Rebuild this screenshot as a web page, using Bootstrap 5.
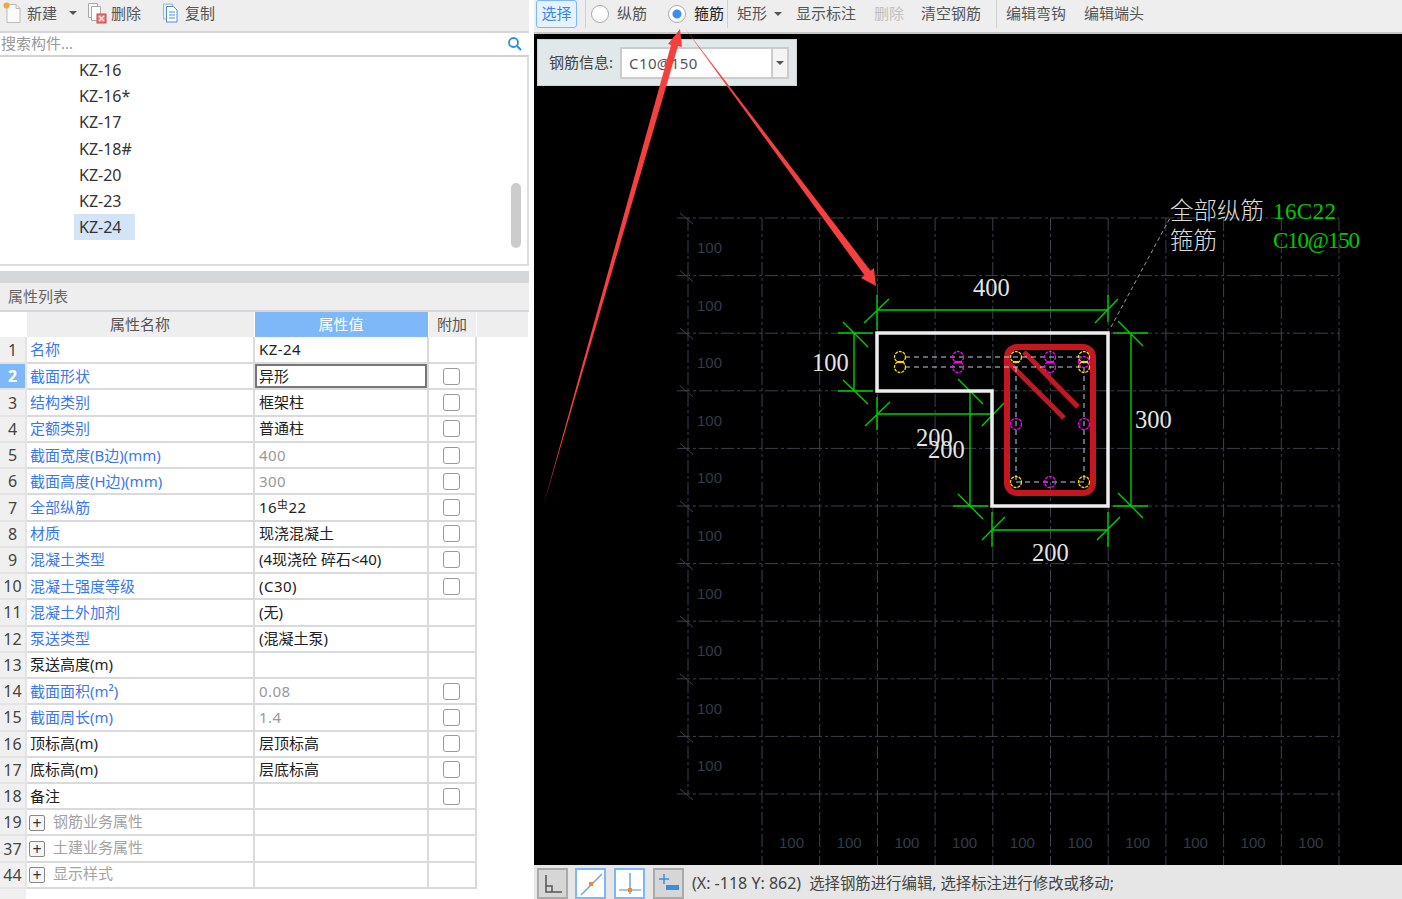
<!DOCTYPE html>
<html lang="zh-CN">
<head>
<meta charset="UTF-8" />
<title>钢筋编辑</title>
<link href="https://cdn.jsdelivr.net/npm/bootstrap@5.3.2/dist/css/bootstrap.min.css" rel="stylesheet" />
<style>
  html, body { height: 100%; }
  body { font-family: "Noto Sans", "Noto Sans CJK SC", sans-serif; font-size: 15px; line-height: 1; color: #333; background: #fff; overflow: hidden; position: relative; }
  .left-side { width: 529px; flex: none; }
  .right-side { width: 868px; flex: none; margin-left: 5px; }
  .tool-bar { height: 33px; background: #eee; border-bottom: 2px solid #d6d7da; color: #555; }
  .tool-left { padding: 0 0 5px 3px; }
  .tool-left .tool-item { margin-right: 20px; }
  .tool-left .tool-item.new-item { margin-right: 10px; }
  .tool-item { display: flex; align-items: center; gap: 4px; white-space: nowrap; }
  .drop-arrow { width: 0; height: 0; border: 4px solid transparent; border-top: 4px solid #555; border-bottom: 0; display: inline-block; }
  .search-row { height: 24px; border-bottom: 2px solid #d0d2d5; padding: 0 7px 2px 1px; color: #999; }
  .part-list { height: 209px; border-right: 2px solid #dcdde0; border-bottom: 2px solid #dcdde0; font-size: 16px; }
  .part-item { height: 26.2px; padding: 0 0 0 79px; display: flex; align-items: center; }
  .part-item.active-part { padding: 0; }
  .part-item.active-part span { background: #d3e4f6; margin-left: 74px; padding: 0 13px 0 5px; height: 26px; display: flex; align-items: center; }
  .list-scroll { width: 10px; height: 65px; left: 511px; top: 183px; background: #ccc; border-radius: 5px; }
  .gray-band { height: 12px; margin-top: 5px; background: #d6d7da; }
  .panel-title { height: 29px; background: #eee; border-bottom: 2px solid #d6d7da; padding: 0 0 0 8px; color: #666; }
  .prop-table { table-layout: fixed; width: 528px; border-collapse: collapse; margin: 0; }
  .prop-table th, .prop-table td { padding: 0; height: 26.24px; border: 0; border-right: 2px solid #d8dadd; border-bottom: 2px solid #d8dadd; font-weight: 400; white-space: nowrap; overflow: hidden; }
  .prop-table thead th { height: 25px; background: #eee; text-align: center; color: #555; border-bottom: 0; border-right: 1px solid #fff; }
  .prop-table thead th.idx-head { background: #fff; }
  .prop-table thead th.val-head { background: #7fb8f8; color: #fff; }
  .prop-table thead th.tail-head { border-right: 0; }
  .prop-table .row-no { background: #f0f0f0; text-align: center; color: #444; font-size: 16px; border-right: 2px solid #e4e4e4; border-bottom-color: #e4e4e4; }
  .prop-table .row-no.sel-no { background: #7fb8f8; color: #fff; font-weight: 700; }
  .prop-table .row-name { padding-left: 3px; color: #3b77ee; }
  .prop-table .row-name.plain-name { color: #222; }
  .prop-table .row-name.group-name { color: #a3a3a3; padding-left: 2px; }
  .prop-table .row-val { padding-left: 4px; color: #222; }
  .prop-table .row-val.latin-val { letter-spacing: .45px; }
  .prop-table .row-val.dim-val { color: #999; }
  .prop-table .row-val.edit-val { box-shadow: inset 0 0 0 2px #777; }
  .prop-table .row-add { text-align: center; }
  .prop-table .row-tail { border: 0; }
  .prop-table .foot-row td { height: 11px; border: 0; }
  .prop-table .form-check-input { width: 17px; height: 17px; margin: 0 2px 0 0; border: 1.5px solid #999; border-radius: 3px; }
  .grade-mark { font-size: 11px; position: relative; top: -4px; }
  .plus-box { display: inline-flex; width: 16px; height: 16px; border: 1px solid #888; border-radius: 2px; margin-right: 8px; vertical-align: middle; justify-content: center; align-items: center; color: #333; font-size: 16px; line-height: 1; background: #f6f6f6; }
  .tool-right { padding-bottom: 5px; border-bottom-color: #c8c8c8; height: 34px; }
  .pick-btn { --bs-btn-padding-x: 0; --bs-btn-padding-y: 0; --bs-btn-font-size: 15px; --bs-btn-line-height: 1; width: 41px; height: 28px; margin-left: 2px; background: #e6f2ff; border: 1px solid #7db7f5; color: #3a85e8; border-radius: 3px; }
  .bar-sep { width: 1px; height: 28px; background: #d0d0d0; flex: none; }
  .tool-right .form-check-input { width: 18px; height: 18px; margin: 0; border: 1.5px solid #aaa; background-color: #fff; float: none; }
  .tool-right .form-check-input:checked { background-color: #fff; border-color: #aaa; background-image: radial-gradient(circle, #3d8ef0 0, #3d8ef0 4px, transparent 5px); }
  .off-item { color: #c0c0c0; }
  .strong-item { color: #222; }
  .radio-item { gap: 8px; }
  .canvas-wrap { height: 831px; background: #000; }
  .canvas-wrap svg { display: block; }
  .rebar-info { left: 3px; top: 5px; width: 260px; height: 47px; background: #e1e8ea; border: 1px solid #ccd2d4; padding: 0 7px 0 11px; gap: 7px; color: #444; }
  .rebar-info .input-group { width: 169px; }
  .rebar-info .form-control { height: 32px; padding: 0 7px; font-size: 15px; letter-spacing: .4px; border: 2px solid #ccc; border-right: 0; border-radius: 0; color: #555; background: #fff; font-family: inherit; }
  .rebar-info .btn { --bs-btn-padding-x: 0; width: 18px; height: 32px; background: #f4f4f4; border: 2px solid #ccc; border-radius: 0; display: flex; align-items: center; justify-content: center; }
  .status-bar { height: 34px; background: #e6e6e6; padding-left: 3px; color: #444; font-size: 15.4px; white-space: nowrap; }
  .state-btn { width: 31px; height: 31px; margin-top: 3px; margin-right: 8px; display: flex; align-items: center; justify-content: center; background: #d6d6d6; border: 2px solid #aaa; flex: none; }
  .state-btn.first-state { margin-right: 7px; }
  .state-btn.on-state { background: #fff; border-color: #7db7f5; }
  .status-text { padding-top: 3px; }
  .coord-text { font-size: 16px; }
  .arrow-layer { left: 0; top: 0; pointer-events: none; }
  .dim-text { font-family: "Liberation Serif", serif; font-size: 24.5px; fill: #e4e4e4; }
  .grid-text { font-family: "Liberation Sans", sans-serif; font-size: 15px; fill: #333c48; }
  .note-text { font-family: "Noto Sans CJK SC", sans-serif; font-size: 23.5px; font-weight: 300; fill: #ddd; }
  .note-green { font-family: "Liberation Serif", serif; font-size: 23px; fill: #00c800; }
</style>
</head>
<body>
<div class="d-flex">
  <div class="left-side position-relative">
    <div class="tool-bar tool-left d-flex align-items-center">
      <div class="tool-item new-item">
        <svg width="20" height="22" viewBox="0 0 20 22"><path d="M4 2.500h9l4 4v14H4z" fill="#fafafa" stroke="#bbb"/><path d="M13 2.500v4h4" fill="none" stroke="#bbb"/><circle cx="3.500" cy="3.500" r="3" fill="#f5a33c"/></svg>
        <span>新建</span><span class="drop-arrow ms-2"></span>
      </div>
      <div class="tool-item">
        <svg width="20" height="22" viewBox="0 0 20 22"><path d="M1.500 1.500h9v14h-9z" fill="#f4f4f4" stroke="#aaa"/><path d="M4.500 4.500h9v14h-9z" fill="#fbfbfb" stroke="#aaa"/><rect x="10" y="12" width="9" height="9" fill="#e87a7a" stroke="#c84a4a"/><path d="M12 14l5 5M17 14l-5 5" stroke="#fff" stroke-width="1.200"/></svg>
        <span>删除</span>
      </div>
      <div class="tool-item">
        <svg width="20" height="22" viewBox="0 0 20 22"><path d="M2.500 2h9v15h-9z" fill="#eaf1fa" stroke="#9db4d2"/><path d="M5.500 4.500h7l3.500 3.500v12h-10.500z" fill="#fff" stroke="#4d8cd6"/><path d="M8 10h6M8 13h6M8 16h6" stroke="#4d8cd6"/></svg>
        <span>复制</span>
      </div>
    </div>
    <div class="search-row d-flex align-items-center justify-content-between">
      <span>搜索构件...</span>
      <svg width="15" height="15" viewBox="0 0 15 15"><circle cx="6.500" cy="6.500" r="4.500" fill="none" stroke="#2f8fd6" stroke-width="1.800"/><path d="M10 10l4 4" stroke="#2f8fd6" stroke-width="2"/></svg>
    </div>
    <div class="part-list">
      <div class="part-item">KZ-16</div>
      <div class="part-item">KZ-16*</div>
      <div class="part-item">KZ-17</div>
      <div class="part-item">KZ-18#</div>
      <div class="part-item">KZ-20</div>
      <div class="part-item">KZ-23</div>
      <div class="part-item active-part"><span>KZ-24</span></div>
    </div>
    <div class="list-scroll position-absolute"></div>
    <div class="gray-band"></div>
    <div class="panel-title d-flex align-items-center">属性列表</div>
    <table class="prop-table">
      <colgroup><col style="width:26px"><col style="width:228px"><col style="width:174px"><col style="width:48px"><col style="width:52px"></colgroup>
      <thead>
        <tr><th class="idx-head"></th><th>属性名称</th><th class="val-head">属性值</th><th>附加</th><th class="tail-head"></th></tr>
      </thead>
      <tbody>
        <tr><td class="row-no">1</td><td class="row-name">名称</td><td class="row-val latin-val">KZ-24</td><td class="row-add"></td><td class="row-tail"></td></tr>
        <tr><td class="row-no sel-no">2</td><td class="row-name">截面形状</td><td class="row-val edit-val">异形</td><td class="row-add"><input class="form-check-input" type="checkbox"></td><td class="row-tail"></td></tr>
        <tr><td class="row-no">3</td><td class="row-name">结构类别</td><td class="row-val">框架柱</td><td class="row-add"><input class="form-check-input" type="checkbox"></td><td class="row-tail"></td></tr>
        <tr><td class="row-no">4</td><td class="row-name">定额类别</td><td class="row-val">普通柱</td><td class="row-add"><input class="form-check-input" type="checkbox"></td><td class="row-tail"></td></tr>
        <tr><td class="row-no">5</td><td class="row-name">截面宽度(B边)(mm)</td><td class="row-val latin-val dim-val">400</td><td class="row-add"><input class="form-check-input" type="checkbox"></td><td class="row-tail"></td></tr>
        <tr><td class="row-no">6</td><td class="row-name">截面高度(H边)(mm)</td><td class="row-val latin-val dim-val">300</td><td class="row-add"><input class="form-check-input" type="checkbox"></td><td class="row-tail"></td></tr>
        <tr><td class="row-no">7</td><td class="row-name">全部纵筋</td><td class="row-val latin-val">16<span class="grade-mark">虫</span>22</td><td class="row-add"><input class="form-check-input" type="checkbox"></td><td class="row-tail"></td></tr>
        <tr><td class="row-no">8</td><td class="row-name">材质</td><td class="row-val">现浇混凝土</td><td class="row-add"><input class="form-check-input" type="checkbox"></td><td class="row-tail"></td></tr>
        <tr><td class="row-no">9</td><td class="row-name">混凝土类型</td><td class="row-val">(4现浇砼 碎石&lt;40)</td><td class="row-add"><input class="form-check-input" type="checkbox"></td><td class="row-tail"></td></tr>
        <tr><td class="row-no">10</td><td class="row-name">混凝土强度等级</td><td class="row-val latin-val">(C30)</td><td class="row-add"><input class="form-check-input" type="checkbox"></td><td class="row-tail"></td></tr>
        <tr><td class="row-no">11</td><td class="row-name">混凝土外加剂</td><td class="row-val">(无)</td><td class="row-add"></td><td class="row-tail"></td></tr>
        <tr><td class="row-no">12</td><td class="row-name">泵送类型</td><td class="row-val">(混凝土泵)</td><td class="row-add"></td><td class="row-tail"></td></tr>
        <tr><td class="row-no">13</td><td class="row-name plain-name">泵送高度(m)</td><td class="row-val"></td><td class="row-add"></td><td class="row-tail"></td></tr>
        <tr><td class="row-no">14</td><td class="row-name">截面面积(m²)</td><td class="row-val latin-val dim-val">0.08</td><td class="row-add"><input class="form-check-input" type="checkbox"></td><td class="row-tail"></td></tr>
        <tr><td class="row-no">15</td><td class="row-name">截面周长(m)</td><td class="row-val latin-val dim-val">1.4</td><td class="row-add"><input class="form-check-input" type="checkbox"></td><td class="row-tail"></td></tr>
        <tr><td class="row-no">16</td><td class="row-name plain-name">顶标高(m)</td><td class="row-val">层顶标高</td><td class="row-add"><input class="form-check-input" type="checkbox"></td><td class="row-tail"></td></tr>
        <tr><td class="row-no">17</td><td class="row-name plain-name">底标高(m)</td><td class="row-val">层底标高</td><td class="row-add"><input class="form-check-input" type="checkbox"></td><td class="row-tail"></td></tr>
        <tr><td class="row-no">18</td><td class="row-name plain-name">备注</td><td class="row-val"></td><td class="row-add"><input class="form-check-input" type="checkbox"></td><td class="row-tail"></td></tr>
        <tr><td class="row-no">19</td><td class="row-name group-name"><span class="plus-box">+</span>钢筋业务属性</td><td class="row-val"></td><td class="row-add"></td><td class="row-tail"></td></tr>
        <tr><td class="row-no">37</td><td class="row-name group-name"><span class="plus-box">+</span>土建业务属性</td><td class="row-val"></td><td class="row-add"></td><td class="row-tail"></td></tr>
        <tr><td class="row-no">44</td><td class="row-name group-name"><span class="plus-box">+</span>显示样式</td><td class="row-val"></td><td class="row-add"></td><td class="row-tail"></td></tr>
        <tr class="foot-row"><td class="row-no"></td><td colspan="4"></td></tr>
      </tbody>
    </table>
  </div>

  <div class="right-side">
    <div class="tool-bar tool-right d-flex align-items-center">
      <button type="button" class="btn pick-btn">选择</button>
      <span class="bar-sep ms-2"></span>
      <label class="tool-item radio-item" style="margin-left:5px"><input class="form-check-input" type="radio" name="barType">纵筋</label>
      <label class="tool-item radio-item strong-item" style="margin-left:21px"><input class="form-check-input" type="radio" name="barType" checked>箍筋</label>
      <span class="bar-sep" style="margin-left:3px"></span>
      <span class="tool-item" style="margin-left:9px;gap:7px">矩形<span class="drop-arrow"></span></span>
      <span class="tool-item" style="margin-left:14px">显示标注</span>
      <span class="tool-item off-item" style="margin-left:18px">删除</span>
      <span class="tool-item" style="margin-left:17px">清空钢筋</span>
      <span class="bar-sep" style="margin-left:15px"></span>
      <span class="tool-item" style="margin-left:9px">编辑弯钩</span>
      <span class="tool-item" style="margin-left:18px">编辑端头</span>
    </div>
    <div class="canvas-wrap position-relative">
      <svg id="drawing" width="868" height="831" viewBox="534 34 868 831">
        <g id="gridLayer" fill="none" stroke="#39424f" stroke-width="1" stroke-dasharray="13 3 3 3"></g>
        <g id="gridLabels"></g>
        <path d="M1111 327L1170 218" stroke="#999" stroke-dasharray="4 3" fill="none"/>
        <!-- dimension lines -->
        <g stroke="#00d000" stroke-width="1.400" fill="none">
          <path d="M877 295V330M1108 295V322M877 310H1108M864 323L889 299M1095 323L1118 299"/>
          <path d="M838 333H873M838 391H873M854 333V391M843 322L868 347M843 380L868 404"/>
          <path d="M1113 333H1148M1113 506H1148M1131 333V506M1118 321L1143 346M1118 493L1143 518"/>
          <path d="M992 512V547M1108 512V547M992 530H1108M982 540L1005 517M1097 540L1120 517"/>
          <path d="M877 397V430M992 397V430M877 414H992M865 426L890 402M982 426L1004 403"/>
          <path d="M953 391H988M953 506H988M970 391V506M958 379L983 404M958 494L983 519"/>
        </g>
        <!-- section outline -->
        <path d="M877 333H1108V506H992V391H877Z" fill="none" stroke="#eee" stroke-width="3.500"/>
        <!-- stirrup -->
        <rect x="1007" y="347" width="86" height="146" rx="10" fill="none" stroke="#c4171f" stroke-width="6"/>
        <path d="M1008 362L1064 418M1024 352L1078 407" stroke="#c4171f" stroke-width="5"/>
        <path d="M905 357H1084M905 367H1084M1016 367V482M1084 367V482M1016 482H1084" stroke="#bcd0e4" stroke-width="1" stroke-dasharray="5 4" fill="none"/>
        <g id="rebarLayer" fill="none" stroke-width="1.300" stroke-dasharray="3 1"></g>
        <path d="M897 362H903M1013 362H1019M1081 362H1087" stroke="#ffd800" stroke-width="2"/>
        <path d="M955 362H961M1047 362H1053" stroke="#f0f" stroke-width="2"/>
        <text class="dim-text" x="973" y="296">400</text>
        <text class="dim-text" x="812" y="371">100</text>
        <text class="dim-text" x="1135" y="428">300</text>
        <text class="dim-text" x="1032" y="561">200</text>
        <text class="dim-text" x="916" y="446">200</text>
        <text class="dim-text" x="928" y="458">200</text>
        <text class="note-text" x="1170" y="219">全部纵筋</text>
        <text class="note-text" x="1170" y="249">箍筋</text>
        <text class="note-green" x="1273" y="219" textLength="63">16C22</text>
        <text class="note-green" x="1273" y="248" textLength="87">C10@150</text>
      </svg>
      <div class="rebar-info position-absolute d-flex align-items-center">
        <span>钢筋信息:</span>
        <div class="input-group flex-nowrap">
          <input type="text" class="form-control" value="C10@150">
          <button type="button" class="btn"><span class="drop-arrow"></span></button>
        </div>
      </div>
    </div>
    <div class="status-bar d-flex align-items-start">
      <div class="state-btn first-state"><svg width="20" height="22" viewBox="0 0 20 22"><path d="M3 2V19H19M3 13H9V19" fill="none" stroke="#555" stroke-width="1.500"/></svg></div>
      <div class="state-btn on-state"><svg width="24" height="24" viewBox="0 0 24 24"><path d="M2 23L23 2" stroke="#6f9bd8" stroke-width="1.200"/><rect x="10" y="10" width="4" height="4" fill="#f08a30"/></svg></div>
      <div class="state-btn on-state"><svg width="24" height="24" viewBox="0 0 24 24"><path d="M12 1V22M1 18H23" stroke="#4d8cd6" stroke-width="1.200"/><rect x="10" y="16" width="4" height="4" fill="#f08a30"/></svg></div>
      <div class="state-btn"><svg width="24" height="24" viewBox="0 0 24 24"><path d="M7 2V12M2 7H12" stroke="#3d8ed8" stroke-width="1.500"/><rect x="9" y="13" width="13" height="5" fill="#3d8ed8"/></svg></div>
      <span class="status-text align-self-center"><span class="coord-text">(X: -118 Y: 862)</span>&nbsp; 选择钢筋进行编辑, 选择标注进行修改或移动;</span>
    </div>
  </div>
</div>

<svg class="arrow-layer position-absolute" width="1402" height="899" viewBox="0 0 1402 899">
  <path d="M543 507L671 45L668 44L680 29L682 47L678 46Z" fill="#f5403f"/>
  <path d="M684 27L870.500 270.700L874 268L876 286L861 278L864.500 275.300Z" fill="#f5403f"/>
</svg>

<script>
  const NS = "http://www.w3.org/2000/svg";
  const grid = document.getElementById("gridLayer");
  const labels = document.getElementById("gridLabels");
  const rebars = document.getElementById("rebarLayer");

  function line(x1, y1, x2, y2, parent, extra) {
    const el = document.createElementNS(NS, "line");
    el.setAttribute("x1", x1);
    el.setAttribute("y1", y1);
    el.setAttribute("x2", x2);
    el.setAttribute("y2", y2);
    if (extra) el.setAttribute("stroke-dasharray", extra);
    parent.appendChild(el);
  }

  function label(x, y) {
    const el = document.createElementNS(NS, "text");
    el.setAttribute("class", "grid-text");
    el.setAttribute("x", x);
    el.setAttribute("y", y);
    el.textContent = "100";
    labels.appendChild(el);
  }

  // 网格线
  for (let i = 0; i <= 10; i++) {
    const y = 218 + i * 57.6;
    line(677, y, 1339, y, grid);
    line(680, y - 5, 693, y + 6, grid, "none");
    if (i < 10) label(697, y + 35);
  }
  line(688, 218, 688, 794, grid);
  for (let i = 0; i <= 10; i++) {
    const x = 762 + i * 57.7;
    line(x, 218, x, 865, grid);
    if (i < 10) label(x + 17, 848);
  }

  // 钢筋点
  const yellow = [[900, 357], [900, 367], [1016, 357], [1084, 357], [1084, 367], [1016, 482], [1084, 482]];
  const pink = [[958, 357], [958, 367], [1050, 357], [1050, 367], [1084, 362], [1016, 424], [1084, 424], [1050, 482]];
  function dots(list, color) {
    list.forEach(function (p) {
      const c = document.createElementNS(NS, "circle");
      c.setAttribute("cx", p[0]);
      c.setAttribute("cy", p[1]);
      c.setAttribute("r", 5.5);
      c.setAttribute("stroke", color);
      rebars.appendChild(c);
    });
  }
  dots(yellow, "#ffd800");
  dots(pink, "#f0f");
</script>
<script src="https://cdn.jsdelivr.net/npm/bootstrap@5.3.2/dist/js/bootstrap.bundle.min.js"></script>
</body>
</html>
